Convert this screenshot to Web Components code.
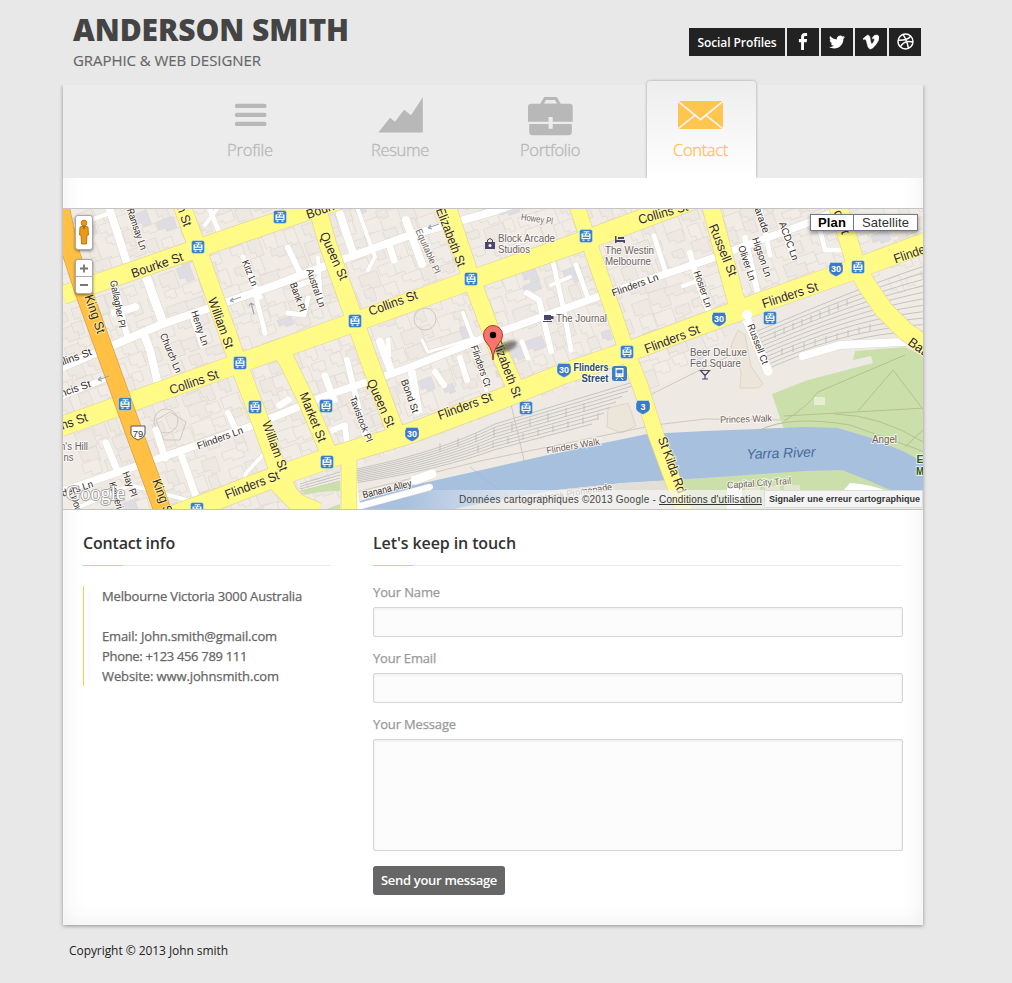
<!DOCTYPE html>
<html lang="en">
<head>
<meta charset="utf-8">
<title>Anderson Smith</title>
<style>
html,body{margin:0;padding:0}
body{background:#e8e8e8;font-family:"Open Sans",sans-serif;min-height:983px;color:#222}
</style>
</head>
<body>
<portfolio-page></portfolio-page>
<script>
function define(name, html, ready) {
  customElements.define(name, class extends HTMLElement {
    connectedCallback() {
      if (this.shadowRoot) return;
      this.attachShadow({mode: 'open'}).innerHTML = html.call ? html(this) : html;
      if (ready) ready(this);
    }
  });
}

/* A single line of text, tracked so that it fills a given width. */
define('fit-text', el => `<style>:host{display:inline-block;white-space:nowrap;width:${el.getAttribute('w')}px}span{display:inline-block}</style><span><slot></slot></span>`, el => {
  const s = el.shadowRoot.querySelector('span');
  const n = el.textContent.length;
  const natural = s.getBoundingClientRect().width;
  if (natural) s.style.letterSpacing = ((+el.getAttribute('w') - natural) / n).toFixed(3) + 'px';
});

const SOCIAL = {
  facebook: '<svg viewBox="0 0 24 24" width="17" height="17"><path fill="#fff" d="M8.6 24V13H5.5V8.5h3.1V5.6C8.6 2 10.7 0 13.9 0c1.5 0 2.8.1 3.2.2v3.9h-2.3c-1.8 0-2.1.8-2.1 2v2.4H17l-.5 4.5h-3.8v11z"/></svg>',
  twitter: '<svg viewBox="0 0 24 24" width="16" height="16"><path fill="#fff" d="M23.954 4.569a10 10 0 0 1-2.825.775 4.958 4.958 0 0 0 2.163-2.723c-.951.555-2.005.959-3.127 1.184a4.92 4.92 0 0 0-8.384 4.482C7.691 8.094 4.066 6.13 1.64 3.161a4.822 4.822 0 0 0-.666 2.475c0 1.71.87 3.213 2.188 4.096a4.904 4.904 0 0 1-2.228-.616v.061a4.923 4.923 0 0 0 3.946 4.827 4.996 4.996 0 0 1-2.212.085 4.937 4.937 0 0 0 4.604 3.417 9.868 9.868 0 0 1-6.102 2.105c-.39 0-.779-.023-1.17-.067a13.995 13.995 0 0 0 7.557 2.209c9.054 0 13.999-7.496 13.999-13.986 0-.209 0-.42-.015-.63a9.936 9.936 0 0 0 2.46-2.548z"/></svg>',
  vimeo: '<svg viewBox="0 0 24 24" width="16" height="16"><path fill="#fff" stroke="#fff" stroke-width=".8" d="M23.977 6.416c-.105 2.338-1.739 5.543-4.894 9.609-3.268 4.247-6.026 6.37-8.29 6.37-1.409 0-2.578-1.294-3.553-3.881L5.322 11.4C4.603 8.816 3.834 7.522 3.01 7.522c-.179 0-.806.378-1.881 1.132L0 7.197c1.185-1.044 2.351-2.084 3.501-3.128C5.08 2.701 6.266 1.984 7.055 1.91c1.867-.18 3.016 1.1 3.447 3.838.465 2.953.789 4.789.971 5.507.539 2.45 1.131 3.674 1.776 3.674.502 0 1.256-.796 2.265-2.385 1.004-1.589 1.54-2.797 1.612-3.628.144-1.371-.395-2.061-1.614-2.061-.574 0-1.167.121-1.777.391 1.186-3.868 3.434-5.757 6.762-5.637 2.473.06 3.628 1.664 3.493 4.797z"/></svg>',
  dribbble: '<svg viewBox="0 0 24 24" width="17" height="17"><g fill="none" stroke="#fff" stroke-width="2.1"><circle cx="12" cy="12" r="10.6"/><path d="M8.3 2C12 7 14.6 13.500 16.200 21.500M1.500 10.300C8 10.500 15.500 9.500 19.300 4.600M4.700 19.500C8 13.500 14.500 10.800 22.500 12.700"/></g></svg>'
};
define('social-link', el => `<style>:host{display:flex;box-sizing:border-box;width:32px;height:28px;padding-bottom:1px;background:#222;align-items:center;justify-content:center}svg{display:block}</style>${SOCIAL[el.getAttribute('kind')]}`);

define('site-header', `<style>
:host{display:flex;justify-content:space-between;box-sizing:border-box;height:85px;width:848px;margin-left:73px}
h1{margin:11px 0 0;font-size:30px;line-height:38px;font-weight:800;color:#444}
p{margin:0;font-size:15px;line-height:22px;color:#666;-webkit-text-stroke:.15px}
nav{display:flex;gap:2px;margin-top:28px;height:28px}
.l{background:#222;color:#fff;width:96px;font-size:12px;font-weight:600;line-height:29px;text-align:center}
</style>
<div><h1><fit-text w="276">ANDERSON SMITH</fit-text></h1><p><fit-text w="188">GRAPHIC &amp; WEB DESIGNER</fit-text></p></div>
<nav><div class="l"><fit-text w="79">Social Profiles</fit-text></div><social-link kind="facebook"></social-link><social-link kind="twitter"></social-link><social-link kind="vimeo"></social-link><social-link kind="dribbble"></social-link></nav>`);

const TABS = {
  profile: '<svg viewBox="222 93 56 45"><path d="M237 105.900H264.400M237 114.900H264.400M237 123.900H264.400" stroke="#b8b8b8" stroke-width="4.400" stroke-linecap="round"/></svg>',
  resume: '<svg viewBox="372 93 56 45"><path fill="#b8b8b8" d="M378.300 132.500 390 117.700 395 121.700 404 109.700 411 115.300 422.800 97.300V132.500Z"/></svg>',
  portfolio: '<svg viewBox="522 93 56 45"><g fill="#b8b8b8"><path fill-rule="evenodd" d="M540 104.200 543.500 98Q544 97 545 97H556Q557 97 557.500 98L561 104.200ZM544 103.700H557L555.300 100.500Q555 100 554.500 100H546.500Q546 100 545.700 100.500Z"/><path d="M531.300 103.700H569.700Q572.700 103.700 572.700 106.700V121.800H552.700V117H548.600V121.800H528V106.700Q528 103.700 531.300 103.700Z"/><path d="M529.200 124H548.600V128.800H552.700V124H571.800V132Q571.800 135.300 568.500 135.300H532.500Q529.200 135.300 529.200 132Z"/></g></svg>',
  contact: '<svg viewBox="674 93 56 45"><path fill="#ffc64f" d="M678 101H723V129H678Z"/><path d="M678 101.300 695.500 115.500 700.500 119.700 705.500 115.500 723 101.300M678.300 128.700 694.800 115.300M722.700 128.700 706.200 115.300" fill="none" stroke="#f3f3f3" stroke-width="1.700"/></svg>'
};
define('nav-tab', el => `<style>
:host{display:block;box-sizing:border-box;width:110px;height:93px;padding-top:8px;text-align:center;color:#b8b8b8;font-size:16.500px;line-height:24px;font-weight:300;-webkit-text-stroke:.35px}
:host([active]){position:relative;width:109px;height:97px;margin:-4px 0 0 2px;padding-top:12px;border-radius:4px 4px 0 0;background:linear-gradient(#ededed,#fff);color:#ffc257;box-shadow:0 0 3px rgba(0,0,0,.35);clip-path:inset(-4px -4px 0 -4px)}
svg{display:block;width:56px;height:45px;margin:0 auto}
:host([active]) slot{display:block;margin-left:-2px}
</style>${TABS[el.getAttribute('icon')]}<slot></slot>`);

define('street-map', () => {
  const roads = {
    bourke:'63,295 193,250 340,200', collins:'60,427 240,363 355,322 471,280 586,240 695,199',
    flinders:'160,521 215,500 275,477 335,456 411,433 488,404 563,374 627,352 705,323 790,292 855,269 930,241',
    william:'180,200 197,247 237,360 255,407 278,470 292,500', market:'272,345 285,357 306,400 331,458',
    queen:'315,200 328,245 355,321 370,363 397,436', eliz:'446,203 470,275 496,345 520,398',
    swan:'575,200 590,245 611,305 627,352 640,385 656,435 686,516', russell:'709,200 740,315',
    spring:'836,200 857,268 868,287 884,310 905,331 935,352', low:'275,480 297,503 318,512', low2:'349,460 349,515'
  };
  const whites = [
    ['63,491 163,457 257,424 325,396 408,368 497,333 600,296 710,259 805,224 850,205',7.500],
    ['63,367 160,325 273,286 325,266 408,236 495,211 520,202',8],['63,396 105,379',6],['63,230 110,213',4],
    ['109,207 126,260',8],['142,265 163,323',9],['114,283 128,340',6],['115,313 135,307',8],['144,335 150,350 157,380',8],['193,320 202,345',5],
    ['243,257 252,280 260,297',5],['256,297 265,333',5],['106,443 117,470',7],['156,430 165,458',7],['182,457 197,499',7],['205,225 220,205',4],['210,210 219,232',5],
    ['228,413 236,430',6],['241,490 246,473 262,456',4],['340,214 352,250',8],['358,210 375,257 368,270',4],['406,220 422,264',8],['390,247 394,260',7],
    ['288,248 299,271',6],['299,285 318,279',6],['288,313 304,315 308,298',5],['318,258 321,300',4],
    ['380,342 390,368',8],['412,373 418,410',8],['388,340 389,355',5],['325,376 334,400',7],['347,360 353,385 366,440',6],['333,430 345,425 347,444',6],['280,405 288,400',7],
    ['422,340 428,352 475,338',3],['463,313 473,340 486,390',4],['435,372 444,385',6],['460,358 467,380',6],
    ['527,293 539,300 551,351',6],['553,262 564,311 571,350',5],['551,285 570,277',4],['576,265 588,298',5],['522,342 528,358',5],
    ['654,236 665,270',5],['690,253 698,283 709,312',6],['683,286 700,280',4],['745,238 757,290',6],['758,200 770,255',5],['783,230 792,252',6],['818,222 825,250 842,250',5],
    ['733,297 742,292',5],['747,320 768,371',9],['803,356 840,345 925,341',8],['352,460 357,507 430,487',6],['415,480 432,474',9],['72,510 130,485 187,500',4]
  ];
  const pl = (p,w,c) => `<polyline points="${p}" fill="none" stroke="${c}" stroke-width="${w}" stroke-linejoin="round"/>`;
  const T = [
    ['Bourke St',157,265,-19,13,54],['Bourke St',332,206,-19,13,54],['William St',179,201,70,13,53],['William St',221,323,70,13,53],['William St',275,446,70,13,52],
    ['King St',95,314,71,13,40],['King St',163,498,70,13,40],['Collins St',194,382,-19,13,51],['Collins St',63,425,-19,13,51],['Collins St',393,303,-20,13,51],['Collins St',663,213,-16,13,51],
    ['Queen St',334,256,66,13,51],['Queen St',381,403,66,13,51],['Market St',313,417,68,13,52],['Elizabeth St',451,237,69,13,62],['Elizabeth St',507,368,69,13,62],
    ['Flinders St',252,485,-21,13,57],['Flinders St',465,406,-20,13,57],['Flinders St',672,339,-21,13,58],['Flinders St',790,295,-18,13,58],['Flinders St',921,250,-19,13,57],
    ['Russell St',723,250,68,13,55],['St Kilda Rd',672,465,70,13,59],['Batman Ave',938,361,36,13,70],['d St',842,222,70,13,25],
    ['Ramsay Ln',137,229,71,10,43],['Gallagher Pl',118,304,79,10,48],['Henty Ln',200,328,71,10,36],['Kitz Ln',250,273,68,10,27],['Church Ln',171,353,67,10,42],
    ['Collins St',70,359,-20,10.500,45],['Francis St',68,391,-19,10.500,47],['Flinders Ln',220,438,-20,10,48],['Flinders Ln',70,491,-18,10,48],['Flinders Ln',635,285,-20,10,49],
    ['Hay Pl',130,484,70,10,26],['Katherine Pl',119,505,73,10,48],['Downie St',80,515,73,10,40],['Bond St',410,396,70,10,35],['Tavistock Pl',361,419,69,9.500,48],
    ['Banana Alley',387,489,-14,10,50],['Austral Ln',316,288,71,10,40],['Bank Pl',298,297,70,10,30],['Flinders Ct',481,366,71,10,43],['Hosier Ln',703,289,71,10,38],
    ['Oliver Ln',747,263,71,10,36],['Higson Ln',762,257,71,10,41],['Parade',761,217,70,10,33],['ACDC Ln',789,241,70,10,40],['Russell Ct',758,344,69,10,42],
    ['Equitable Pl',428,251,66,9.500,48,'#70655f'],['Howey Pl',537,219,8,9.500,32,'#70655f'],['Princes Walk',746,419,-2,9.500,52,'#6f5d55'],['Flinders Walk',573,446,-10,9.500,54,'#6f5d55'],
    ['Capital City Trail',759,483,-4,9.500,64,'#6f5d55'],['Southbank Promenade',567,494,-9,9.500,91,'#6a5a53'],['Angel',884.500,440,0,10,25,'#6f5d55'],['Yarra River',781,453,-2,14,69,'#4a6a98','italic'],
    ['Block Arcade',526.500,238,0,10.500,57,'#6b615f'],['Studios',514,249,0,10.500,32,'#6b615f'],['The Westin',629.500,250,0,10.500,49,'#6b615f'],['Melbourne',628,261,0,10.500,46,'#6b615f'],
    ['The Journal',581.500,318,0,10.500,51,'#6b615f'],['Beer DeLuxe',718.500,352,0,10.500,57,'#6b615f'],['Fed Square',715.500,363,0,10.500,51,'#6b615f'],
    ["n's Hill",74,447,0,10,28,'#6b615f'],['ns',68.500,458,0,10,10,'#6b615f'],
    ['Flinders',591,368,0,10,35,'#284a70','','bold'],['Street',595,379,0,10,27,'#284a70','','bold'],['E',920,460,0,10,7,'#2b5b22','','bold'],['M',920,472,0,10,8,'#2b5b22','','bold']
  ];
  const texts = T.map(t => { const grey = !!t[6];
    return `<text transform="translate(${t[1]} ${t[2]}) rotate(${t[3]})" y="${(t[4]*.34).toFixed(1)}" text-anchor="middle" font-size="${t[4]}" textLength="${t[5]}" lengthAdjust="spacingAndGlyphs" fill="${t[6]||'#33291c'}" ${t[7]?'font-style="italic"':''} ${t[8]?'font-weight="bold"':''} ${t[7]?'':`paint-order="stroke" stroke="${grey||t[4]<12?'#fff':'#fffbb0'}" stroke-opacity=".7" stroke-width="2"`}>${t[0]}</text>`; }).join('');
  const trams = [[280,217],[198,247],[355,321],[240,363],[125,404],[255,407],[326,406],[327,462],[197,509],[471,279],[586,236],[627,352],[526,408],[858,267],[770,318]]
    .map(p => `<use href="#tram" x="${p[0]}" y="${p[1]}"/>`).join('');
  const shields = [[564,370,30],[412,434,30],[719,319,30],[836,269,30],[643,407,3]]
    .map(p => `<g transform="translate(${p[0]} ${p[1]})"><path d="M-6-6.500H6Q6-4.500 7-3.500V2Q6 5 0 7.500-6 5-7 2V-3.500Q-6-4.500-6-6.500Z" fill="#3a7ac6" stroke="#fff" stroke-opacity=".6" stroke-width=".6"/><text y="3.200" text-anchor="middle" font-size="9" font-weight="bold" fill="#fff">${p[2]}</text></g>`).join('');
  /* Rail yards: two fans of tracks with cross ties. */
  let rail = '';
  for (let i = 0; i < 9; i++) {
    rail += `<path d="M357 ${469+i*1.700}Q440 ${452+i*2.200} 495 ${424+i*3.200}L${640-i*6} ${380+i*5.500}"/>`;
    rail += `<path d="M${440+i*18} ${443-i*5}v9M${478+i*15} ${445-i*4}v7"/>`;
  }
  for (let i = 0; i < 11; i++) {
    rail += `<path d="M${755+i} ${332+i*3.800}C800 ${314+i*4} 860 ${287+i*4.500} 925 ${266+i*6.500}"/>`;
    if (i < 9) rail += `<path d="M${775+i*9} ${331-i*4}v7M${782+i*11} ${348-i*3}v7"/>`;
  }
  for (let i = 0; i < 5; i++) rail += `<path d="M300 ${484+i*2.500} 340 ${472+i*3}"/>`;
  /* Small buildings scattered on the street grid's own axes. */
  let bld = '', s = 7; const rnd = () => (s = (s*16807)%2147483647)/2147483647;
  for (let y = -260; y < 330; y += 17) for (let x = -60; x < 1000; x += 19) {
    const w = 9+rnd()*13, h = 8+rnd()*12, f = rnd();
    bld += `<path d="M${(x+rnd()*6).toFixed(1)} ${(y+rnd()*6).toFixed(1)}h${w.toFixed(1)}v${h.toFixed(1)}h${(-w*.6).toFixed(1)}v${(-h*.3).toFixed(1)}h${(-w*.4).toFixed(1)}z" fill="${f>.96?'#dedde3':f>.5?'#f1ede6':'#ede8e1'}"/>`;
  }
  const ye = Object.values(roads), ww = [18,19,20,17,16,17,17,15,17,18,18,15];
  return `<style>
:host{display:block;position:relative;height:300px;border-top:1px solid #c4c4c4;border-bottom:1px solid #c4c4c4;font-family:"Liberation Sans",Arial,sans-serif;overflow:hidden}
svg.map{display:block;width:860px;height:300px}
.ctl{position:absolute;left:12px;width:18px;box-sizing:border-box;background:#fff;border:1px solid #aaa;border-radius:3px;box-shadow:0 1px 3px rgba(0,0,0,.45)}
.peg{top:6px;height:35px}.zoom{top:50px;height:35px}.ctl svg{display:block}
.type{position:absolute;right:5px;top:5px;height:17px;width:108px;box-sizing:border-box;display:flex;background:#fff;border:1px solid #70788a;box-shadow:0 2px 4px rgba(0,0,0,.4);font-size:13px;line-height:16px;color:#333}
.type b{width:43px;box-sizing:border-box;padding-left:7px;border-right:1px solid #70788a;color:#000}.type span{padding-left:8px}
.credit{position:absolute;right:0;bottom:0;height:19px;width:520px;display:flex;background:linear-gradient(90deg,rgba(245,245,245,0),rgba(245,245,245,.7) 110px);font-size:10px;line-height:19px;color:#444}
.credit .a{display:flex;gap:3px;margin-left:56px;width:305px;flex:none}.credit .u{color:#333;height:14px;border-bottom:1px solid #333}
.credit .b{box-sizing:border-box;width:159px;height:18px;line-height:17px;padding-left:4px;background:#f4f4f4;border:1px solid #ddd;font-weight:bold;font-size:9px;color:#333}
</style>
<svg class="map" viewBox="63 209 860 300" font-family="Liberation Sans,Arial,sans-serif">
<defs><g id="tram"><rect x="-6.500" y="-6.500" width="13" height="13" rx="2" fill="#3a80c8" stroke="#fff" stroke-opacity=".5" stroke-width=".7"/><path d="M-2.500-4.200H3.500M.5-4V-2" stroke="#fff"/><path d="M-4.500-2.500H4.500V3H-4.500Z" fill="#fff"/><path d="M-3-1.200H-1M.2-1.200H3M-3.300 1.300H3.300" stroke="#3a80c8" stroke-width="1.200"/><path d="M-3.500 4.200H-1.500M1.500 4.200H3.500" stroke="#fff" stroke-width="1.300"/></g>
<filter id="soft"><feGaussianBlur stdDeviation="1.500"/></filter></defs>
<path fill="#f0ebe4" d="M63 209H923V509H63Z"/>
<g transform="translate(63 240) rotate(-20)" stroke="#ddd7cf" stroke-width=".6">${bld}</g>
<path fill="#eeeae3" d="M356 467 425 440 627 366 640 385 652 437 580 450 490 470 355 505ZM742 322 860 277 890 318 925 350V362L772 394 784 430 660 436 642 395 690 370Z"/>
<path fill="#ebe5da" stroke="#d5cdbd" stroke-width=".7" d="M738 330 745 335 751 366 763 384 758 388H740L741 372 731 346ZM608 408 628 403 636 426 622 433 607 427Z"/>
<g fill="none" stroke="#b7b7b5" stroke-width="1" stroke-opacity=".75">${rail}</g>
<g fill="none" stroke="#cfc8bd" stroke-width="1"><path d="M357 492 480 461 655 425 705 419 784 420M510 400 524 460 518 500M640 400 700 370 742 350"/><circle cx="166" cy="421" r="12"/><path d="M156 420 170 412 186 422 180 440 164 440Z"/><circle cx="425" cy="319" r="11"/></g>
<path fill="#cbdfab" d="M772 394 808 380 873 363 871 356 853 360 855 351 905 347 925 357V463L905 452 872 438 838 428 784 430ZM650 482 800 470 850 470 925 500V510H650ZM303 490 340 481V491Q320 491 305 495ZM324 510 340 504V510Z"/>
<path fill="#a7c0de" d="M355 503 392 490 495 467 570 450 647 434 705 431 805 427 838 428 872 438 905 452 925 463V505L872 482 842 470 805 471 705 478 623 483 557 490 490 502 440 512H355Z"/>
<path fill="#e4dfd6" d="M440 512 490 502 557 490 623 483 668 481 680 512Z"/>
<g fill="#ece7dc"><path d="M727 488H742V510H727ZM850 483Q870 484 890 492L870 500H835Z" fill="#fff"/><path d="M745 487H760V500H745ZM765 486H780V500H765ZM784 485H800V500H784Z" opacity=".7"/></g>
<g fill="none" stroke="#b6bf93" stroke-width="1"><path d="M784 421Q806 408 818 392L905 355M784 416 925 408M835 414Q880 415 925 443M858 411 893 370 925 412M905 447 925 428M760 430Q790 415 850 425L925 452"/></g>
<path d="M470 467 518 505" stroke="#9dafc2" stroke-width=".8" opacity=".6"/>
<path fill="#e5eed0" d="M814 397H825V405H814Z"/>
${whites.map(r => pl(r[0],r[1]+1,'#dfdad2')).join('')}
${whites.map(r => `<g stroke-linecap="round">${pl(r[0],r[1],'#fff')}</g>`).join('')}
${ye.map((r,i) => pl(r,ww[i]+1.400,'#e3d79a')).join('')}
${ye.map((r,i) => pl(r,ww[i],'#fffb86')).join('')}
<circle cx="747" cy="315" r="5" fill="#fff"/>
${pl('58,195 70,250 83,290 107,357 135,435 162,509 168,525',18,'#d9a04a')}
${pl('58,195 70,250 83,290 107,357 135,435 162,509 168,525',16.500,'#ffc044')}
<g stroke="#9aa2b3" stroke-width="1.100" fill="none"><path d="M98 380 109 376M98 380l3-3M98 380l4 1M230 301 241 297M230 301l3-3M230 301l4 1M251 303 254 314M251 303l-2 3M251 303l3 2M428 228 439 224M428 228l3-3M428 228l4 1"/></g>
${trams}${shields}
<path d="M131 426H145V434Q144 438 138 440 132 438 131 434Z" fill="#fff" stroke="#555"/><text x="138" y="436.500" text-anchor="middle" font-size="9.500" fill="#333">79</text>
<rect x="612" y="366" width="15" height="15" rx="2.500" fill="#3a80c8"/><path d="M615.500 368H623.500V377H615.500Z" fill="#fff"/><path d="M617 370H622V373H617ZM617 375H618.500M620.500 375H622" fill="#3a80c8" stroke="#3a80c8" stroke-width=".8"/><path d="M616 380 618 377.500M623 380 621 377.500" stroke="#fff"/>
<g fill="#4c4568"><path d="M485 242H495V249H485Z"/><path d="M487.500 242V240Q490 237 492.500 240V242" fill="none" stroke="#4c4568"/><circle cx="490" cy="245.500" r="1.500" fill="#fff"/><path d="M615 236H616.500V240H625V243H623.500V242H616.500V243H615ZM618 237H624V239H618ZM544 315H551V320H544ZM543 321H552V322H543ZM551 316H553.500V319H551"/><path d="M700.500 370.500H709.500L705 375.500ZM705 375V379M702 379H708" fill="none" stroke="#4c4568" stroke-width="1.200"/></g>
${texts}
<ellipse cx="506" cy="347" rx="12" ry="4.500" transform="rotate(-22 506 347)" fill="#333" opacity=".6" filter="url(#soft)"/>
<path d="M493 360Q492.500 350 487.500 344 483.500 340 483.500 335A9.500 9.500 0 0 1 502.500 335Q502.500 340 498.500 344 493.500 350 493 360Z" fill="#f9746c" stroke="#a03a35" stroke-width="1"/><circle cx="493" cy="335" r="3.200" fill="#000"/>
<text x="66" y="500" font-family="Liberation Serif,serif" font-size="22" textLength="59" lengthAdjust="spacingAndGlyphs" fill="#fff" stroke="#999" stroke-width="1.600" paint-order="stroke">Google</text>
</svg>
<div class="ctl peg"><svg width="16" height="33" viewBox="0 0 16 33"><circle cx="8" cy="7" r="2.900" fill="#e89a10" stroke="#a76508" stroke-width=".7"/><path d="M4 11Q8 9 12 11L12.500 19H11L10.500 28H5.500L5 19H3.500Z" fill="#eb9b13" stroke="#a76508" stroke-width=".8"/><path d="M6.500 10.500 8 14 9.500 10.500Z" fill="#c8571c"/></svg></div>
<div class="ctl zoom"><svg width="16" height="33" viewBox="0 0 16 33"><path d="M0 16.500H16" stroke="#aaa"/><path d="M4 8.500H12M8 4.500V12.500M4 25H12" stroke="#777" stroke-width="1.800"/></svg></div>
<div class="type"><b><fit-text w="28">Plan</fit-text></b><span><fit-text w="47">Satellite</fit-text></span></div>
<div class="credit"><div class="a"><fit-text w="197">Données cartographiques ©2013 Google -</fit-text><div class="u"><fit-text w="103">Conditions d'utilisation</fit-text></div></div><div class="b"><fit-text w="151">Signaler une erreur cartographique</fit-text></div></div>`;
});

define('section-title', `<style>:host{display:block;height:37px;padding-top:2px;box-sizing:border-box;font-size:16px;line-height:24px;font-weight:600;color:#333;border-bottom:1px solid #eaeaea;position:relative}
:host::after{content:"";position:absolute;left:0;bottom:-1px;width:40px;height:1px;background:#ffc64f}</style><slot></slot>`);

define('contact-info', `<style>:host{display:block;width:248px}
.body{margin-top:20px;border-left:1px solid #ffc64f;padding-left:18px;height:100px;font-size:13px;line-height:20px;color:#666;-webkit-text-stroke:.25px}
.body div{height:20px}</style>
<section-title><fit-text w="92">Contact info</fit-text></section-title>
<div class="body"><div><fit-text w="200">Melbourne Victoria 3000 Australia</fit-text></div><div></div><div><fit-text w="175">Email: John.smith@gmail.com</fit-text></div><div><fit-text w="145">Phone: +123 456 789 111</fit-text></div><div><fit-text w="177">Website: www.johnsmith.com</fit-text></div></div>`);

define('form-field', el => `<style>:host{display:block;margin-bottom:12px;font-size:13px;line-height:18px;color:#999;-webkit-text-stroke:.25px}
.box{margin-top:6px;box-sizing:border-box;width:530px;height:${el.getAttribute('h')}px;border:1px solid #d6d6d6;border-radius:2px;background:#fcfcfc;box-shadow:inset 0 1px 3px rgba(0,0,0,.07)}</style>
<slot></slot><div class="box"></div>`);

define('contact-form', `<style>:host{display:block;width:530px}
section-title{width:528px;margin-bottom:17px}
button{display:block;margin:15px 0 0;padding:0 0 1px 8px;border:0;border-radius:3px;width:132px;height:29px;background:#666;color:#fff;font:600 13px/26px "Open Sans",sans-serif;text-align:left}</style>
<section-title><fit-text w="143">Let's keep in touch</fit-text></section-title>
<form-field h="30"><fit-text w="67">Your Name</fit-text></form-field>
<form-field h="30"><fit-text w="63">Your Email</fit-text></form-field>
<form-field h="112"><fit-text w="83">Your Message</fit-text></form-field>
<button type="button"><fit-text w="116">Send your message</fit-text></button>`);

define('portfolio-page', `<style>
:host{display:block;width:1012px;height:983px;overflow:hidden}
main{display:block;width:860px;height:840px;margin-left:63px;background:#fff;box-shadow:0 1px 4px rgba(0,0,0,.38),inset 0 0 24px rgba(0,0,0,.07);clip-path:inset(0 -8px -8px -8px)}
nav{display:flex;gap:40px;height:93px;padding-left:132px}
street-map{margin-top:30px}
.cols{display:flex;gap:42px;padding:19px 0 0 20px}
footer{margin:16px 0 0 69px;font-size:12px;line-height:20px;color:#222}
.tabs{position:relative;width:860px;height:93px;margin:0 0 -93px 63px;z-index:2}
main .bar{height:93px;background:#ececec}
</style>
<site-header></site-header>
<div class="tabs"><nav><nav-tab icon="profile"><fit-text w="46">Profile</fit-text></nav-tab><nav-tab icon="resume"><fit-text w="58">Resume</fit-text></nav-tab><nav-tab icon="portfolio"><fit-text w="60">Portfolio</fit-text></nav-tab><nav-tab icon="contact" active><fit-text w="55">Contact</fit-text></nav-tab></nav></div>
<main><div class="bar"></div><street-map></street-map>
<div class="cols"><contact-info></contact-info><contact-form></contact-form></div></main>
<footer><fit-text w="159">Copyright © 2013 John smith</fit-text></footer>`);
</script>
</body>
</html>
